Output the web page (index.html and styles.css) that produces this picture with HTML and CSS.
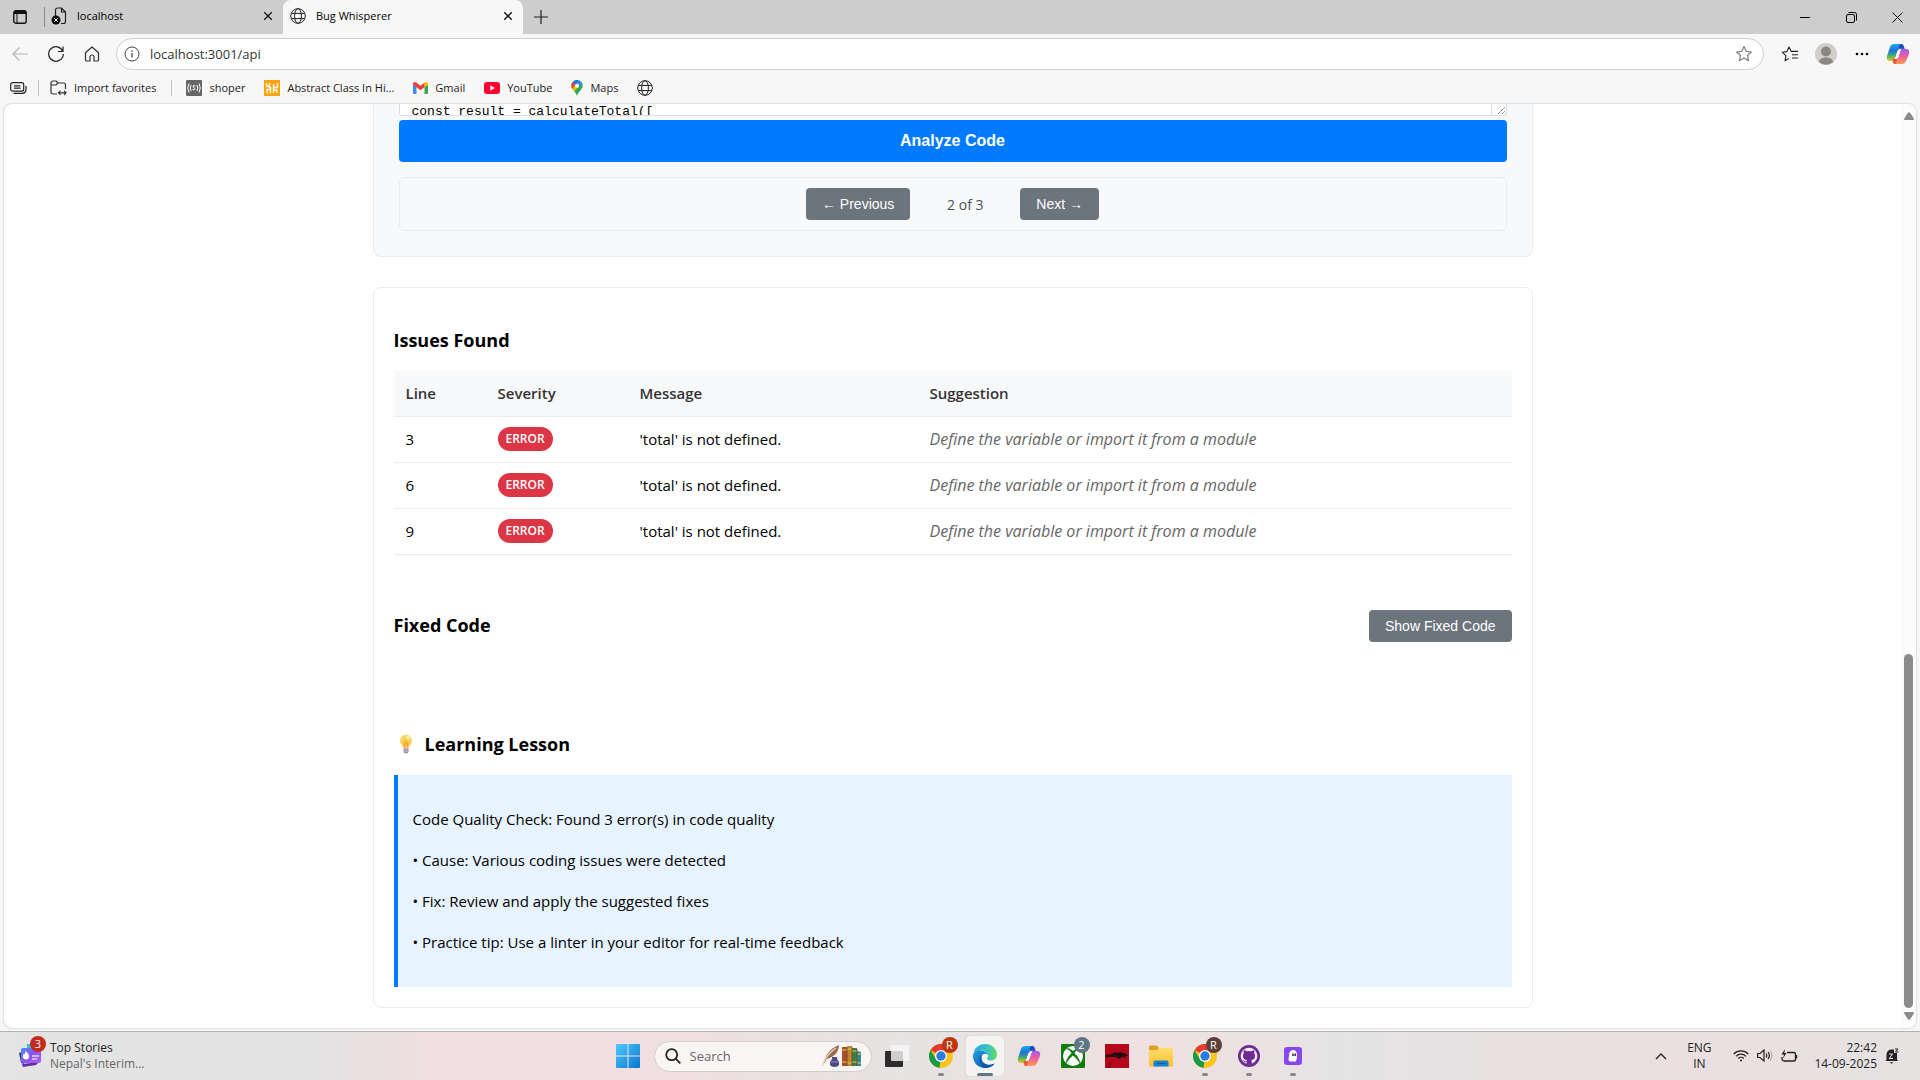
FILE: index.html
```html
<!DOCTYPE html>
<html lang="en">
  <head>
    <meta charset="utf-8" />
    <title>Bug Whisperer</title>
    <link rel="stylesheet" href="styles.css">
  </head>
  <body>

<svg class="defs" aria-hidden="true">
  <defs>
    <linearGradient id="cpA" x1="0" y1="0" x2="0" y2="1"><stop offset="0" stop-color="#19a9e8"/><stop offset=".4" stop-color="#2372d8"/><stop offset=".7" stop-color="#45b36b"/><stop offset="1" stop-color="#f3c613"/></linearGradient>
    <linearGradient id="cpB" x1="0" y1="0" x2="0" y2="1"><stop offset="0" stop-color="#9a5cf0"/><stop offset=".5" stop-color="#ec5f9c"/><stop offset="1" stop-color="#ff9a52"/></linearGradient>
    <linearGradient id="edA" x1="0" y1="0" x2="1" y2="0"><stop offset="0" stop-color="#2aa7e5"/><stop offset=".6" stop-color="#36c6c0"/><stop offset="1" stop-color="#66dc58"/></linearGradient>
    <linearGradient id="edB" x1="0" y1="0" x2="1" y2="1"><stop offset="0" stop-color="#1f9de0"/><stop offset="1" stop-color="#0c4fa0"/></linearGradient>
    <linearGradient id="win" x1="0" y1="0" x2="1" y2="1"><stop offset="0" stop-color="#4ecbfb"/><stop offset="1" stop-color="#0874d0"/></linearGradient>
    <linearGradient id="purple" x1="0" y1="0" x2="1" y2="1"><stop offset="0" stop-color="#4a8bf0"/><stop offset=".5" stop-color="#8a55f2"/><stop offset="1" stop-color="#b45cf6"/></linearGradient>
    <linearGradient id="fold" x1="0" y1="0" x2="0" y2="1"><stop offset="0" stop-color="#ffdc6b"/><stop offset="1" stop-color="#fcc02e"/></linearGradient>
    <radialGradient id="bulb" cx=".5" cy=".65" r=".6"><stop offset="0" stop-color="#f9b83e"/><stop offset="1" stop-color="#fddb6c"/></radialGradient>
  </defs>
  <symbol id="globe" viewBox="0 0 16 16"><g fill="none" stroke="#222" stroke-width="1"><circle cx="8" cy="8" r="7.3"/><ellipse cx="8" cy="8" rx="3.4" ry="7.3"/><path d="M1.4 5.4h13.2M1.4 10.6h13.2"/></g></symbol>
  <symbol id="close" viewBox="0 0 10 10"><path d="M1.2 1.2l7.6 7.6M8.8 1.2L1.2 8.8" stroke="#111" stroke-width="1.3"/></symbol>
  <symbol id="star" viewBox="0 0 18 18"><path d="M9 1.6l2.2 4.8 5.2.6-3.9 3.5 1.1 5.2L9 13.1l-4.6 2.6 1.1-5.2L1.6 7l5.2-.6z" fill="none" stroke="#777" stroke-width="1.1" stroke-linejoin="round"/></symbol>
  <symbol id="copilot" viewBox="0 0 24 24">
    <path d="M8.500 2h6c1.800 0 2.500 1 3 2.600L18 7h-3.500c-1.800 0-2.700 1-3.100 2.500L9 17.200c-.4 1.200-1.200 1.800-2.600 1.800H4c-2.800 0-3.800-2-3-5L4 5c.7-2 2-3 4.500-3z" fill="url(#cpA)"/>
    <path d="M14 2h1.500c1.200 0 1.800.8 2.200 2l1 3h-4c-1 0-1.800-1.200-2.200-2.400z" fill="#1b4cc0"/>
    <path d="M15.500 22h-6c-1.800 0-2.500-1-3-2.600L6 17h3.500c1.800 0 2.700-1 3.100-2.500L15 6.800C15.400 5.600 16.200 7 17.600 7H20c2.800 0 3.800 2 3 5l-3 7c-.7 2-2 3-4.500 3z" fill="url(#cpB)"/>
    <path d="M7 17h4c-1 2 0 5-1.500 5-1.500 0-2-1-2.500-2.600z" fill="#ea5a3a"/>
    <path d="M13.200 7.800c.4-.6 1-.8 1.800-.8l-2.600 7.500C12 16 11 17 9 17l2.400-7.500z" fill="#fff"/>
  </symbol>
  <symbol id="chrome" viewBox="0 0 24 24">
    <circle cx="12" cy="12" r="12" fill="#fcc51c"/>
    <path d="M12 12L1.600 6A12 12 0 0 1 22.400 6z" fill="#e33b2e"/>
    <path d="M1.600 6l5.200 9L12 18l-1 6A12 12 0 0 1 1.600 6z" fill="#189a4a"/>
    <path d="M12 12l5.200 3L12 24l-1.500 0z" fill="#fcc51c"/>
    <circle cx="12" cy="12" r="6" fill="#fff"/><circle cx="12" cy="12" r="4.700" fill="#2a7de1"/>
  </symbol>
</svg>

<!-- browser -->
<header class="browser">
  <div class="tabstrip">
    <button class="icon-btn" aria-label="Tab actions"><svg width="14" height="14" viewBox="0 0 14 14"><rect x=".8" y=".8" width="12.400" height="12.400" rx="2" fill="none" stroke="#111" stroke-width="1.400"/><path d="M1 2.500h12" stroke="#111" stroke-width="3"/><path d="M4 2v11" stroke="#111" stroke-width="1"/></svg></button>
    <span class="divider"></span>
    <div class="tab">
      <svg width="16" height="18" viewBox="0 0 16 18"><path d="M4.500 9V3a2 2 0 0 1 2-2h4l4 4v9.500a2 2 0 0 1-2 2H10M10.500 1v4h4" fill="none" stroke="#222" stroke-width="1.200"/><circle cx="5" cy="13" r="4.500" fill="#111"/><path d="M3.300 11.300l3.400 3.400M6.700 11.300l-3.400 3.400" stroke="#fff"/></svg>
      <span>localhost</span>
      <button class="x" aria-label="Close tab"><svg width="10" height="10"><use href="#close"/></svg></button>
    </div>
    <div class="tab active">
      <svg width="16" height="16"><use href="#globe"/></svg>
      <span>Bug Whisperer</span>
      <button class="x" aria-label="Close tab"><svg width="10" height="10"><use href="#close"/></svg></button>
    </div>
    <button class="icon-btn" aria-label="New tab"><svg width="14" height="14"><path d="M7 0v14M0 7h14" stroke="#222" stroke-width="1.200"/></svg></button>
    <div class="window-btns">
      <button aria-label="Minimize"><svg width="10" height="10"><path d="M0 5.500h10" stroke="#000"/></svg></button>
      <button aria-label="Restore"><svg width="11" height="11" fill="none" stroke="#000"><rect x=".5" y="2.500" width="8" height="8" rx="1.500"/><path d="M2.500 .5h6a2 2 0 0 1 2 2v6"/></svg></button>
      <button aria-label="Close"><svg width="11" height="11"><path d="M.5 .5l10 10M10.500 .5l-10 10" stroke="#000"/></svg></button>
    </div>
  </div>

  <div class="toolbar">
    <button class="icon-btn" aria-label="Back"><svg width="16" height="14" fill="none" stroke="#b5b5b5" stroke-width="1.200"><path d="M16 7H1M7.500 .5L1 7l6.500 6.500"/></svg></button>
    <button class="icon-btn" aria-label="Refresh"><svg width="18" height="18" fill="none" stroke="#222" stroke-width="1.200"><path d="M15.800 6.300A7.300 7.300 0 1 0 16.300 9M16 1.500v5h-5"/></svg></button>
    <button class="icon-btn" aria-label="Home"><svg width="16" height="16" fill="none" stroke="#333" stroke-width="1.200" stroke-linejoin="round"><path d="M1.500 6.800L8 1l6.500 5.800V14a1 1 0 0 1-1 1H10v-4a2 2 0 0 0-4 0v4H2.500a1 1 0 0 1-1-1z"/></svg></button>
    <div class="address">
      <svg width="16" height="16" fill="none" stroke="#444"><circle cx="8" cy="8" r="7"/><path d="M8 7v4.500M8 4.200v1.500" stroke-width="1.300"/></svg>
      <input type="text" aria-label="Address" value="localhost:3001/api">
      <svg width="18" height="18"><use href="#star"/></svg>
    </div>
    <button class="icon-btn" aria-label="Favorites"><svg width="18" height="18" fill="none" stroke="#222" stroke-width="1.100" stroke-linejoin="round"><path d="M8 13.400l-3.900 2.300.8-5L1.200 7.200l4.700-.6L8 2l2.200 4.400h6.800M11 9.700h6M11 13h6"/></svg></button>
    <button class="icon-btn" aria-label="Profile"><svg width="22" height="22" viewBox="0 0 22 22"><circle cx="11" cy="11" r="11" fill="#d1cdc8"/><circle cx="11" cy="8.500" r="5" fill="#8b8784"/><path d="M3.800 19c1-3.500 4-4.500 7.200-4.500s6.200 1 7.200 4.500A11 11 0 0 1 3.800 19z" fill="#8b8784"/></svg></button>
    <button class="icon-btn" aria-label="Settings"><svg width="14" height="4"><circle cx="2" cy="2" r="1.300"/><circle cx="7" cy="2" r="1.300"/><circle cx="12" cy="2" r="1.300"/></svg></button>
    <button class="icon-btn" aria-label="Copilot"><svg width="24" height="24"><use href="#copilot"/></svg></button>
  </div>

  <nav class="favorites">
    <button class="icon-btn" aria-label="Workspaces"><svg width="17" height="12" fill="none" stroke="#222" stroke-width="1.200"><rect x=".7" y=".7" width="13" height="8.500" rx="2"/><path d="M3.500 11.300h9a3.500 3.500 0 0 0 3.500-3.500V4M4 3.800h6.500M4 6.200h6.500"/></svg></button>
    <span class="divider"></span>
    <a href="#"><svg width="17" height="16" fill="none" stroke="#333" stroke-width="1.200"><path d="M7 14H3a2 2 0 0 1-2-2V3a2 2 0 0 1 2-2h3l2 2h5.500a2 2 0 0 1 2 2v4M1 5h5l2-2M8.500 12.800h7.500M10.500 10.800l-2 2 2 2M14 10.800l2 2-2 2"/></svg>Import favorites</a>
    <span class="divider"></span>
    <a href="#"><svg width="16" height="16"><rect width="16" height="16" rx="1" fill="#666"/><g fill="none" stroke="#fff"><path d="M3 3.500q-2.500 4.500 0 9M5 5q-1.500 3 0 6M13 3.500q2.500 4.500 0 9M11 5q1.500 3 0 6M9.500 6q-1.500-1-2.500 0c-.8 1.500 2.300 1.500 2 3q-1 1.500-2.500.5"/></g></svg>shoper</a>
    <a href="#"><svg width="16" height="16"><rect width="16" height="16" fill="#ffa407"/><path d="M2.500 3v3l4 1.500v6M3 13V9.500h3M5.500 3v4M9.500 13V7.500h4V3M9.500 7.500V4M13 10v3M9.500 10H13" stroke="#fff" stroke-width="1.400" fill="none"/></svg>Abstract Class In Hi...</a>
    <a href="#"><svg width="15" height="12" viewBox="0 0 15 12"><path d="M0 2v9a1 1 0 0 0 1 1h2.500V4z" fill="#4285f4"/><path d="M15 2v9a1 1 0 0 1-1 1h-2.500V4z" fill="#34a853"/><path d="M0 2c0-1.700 1.900-2.600 3.300-1.400L7.500 3.800l4.200-3.200V5L7.500 8.200 3.500 5.200 0 2.600z" fill="#ea4335"/><path d="M11.500 .8C13 -.6 15 .3 15 2v.8l-3.500 2.600z" fill="#fbbc04"/></svg>Gmail</a>
    <a href="#"><svg width="16" height="12"><rect width="16" height="12" rx="3" fill="#f03"/><path d="M6.300 3.300v5.400l4.500-2.700z" fill="#fff"/></svg>YouTube</a>
    <a href="#"><svg width="12" height="16" viewBox="0 0 12 16"><path d="M6 0a5.700 5.700 0 0 1 5.700 5.700C11.700 9.500 7.500 11 6 16 4.500 11 .3 9.500 .3 5.700A5.700 5.700 0 0 1 6 0z" fill="#34a853"/><path d="M.3 5.700A5.700 5.700 0 0 1 2 1.800l2.500 2L1.500 9Q.3 7.500 .3 5.700z" fill="#ea4335"/><path d="M2 1.800A5.700 5.700 0 0 1 8 .4L4.200 4.400z" fill="#1a73e8"/><path d="M8 .4a5.600 5.600 0 0 1 3.300 3L7.500 7 5 4z" fill="#4285f4"/><path d="M1.400 8.700L5 5l2.600 2L3.200 11z" fill="#fbbc04"/><circle cx="6" cy="5.700" r="2" fill="#fff"/></svg>Maps</a>
    <a href="#" aria-label="Site"><svg width="16" height="16"><use href="#globe"/></svg></a>
  </nav>
</header>

<!-- page -->
<div class="viewport">
  <main class="page">
    <div class="container">

      <section class="editor">
        <div class="code-box">
          <textarea aria-label="Code" rows="1" spellcheck="false">const result = calculateTotal([</textarea>
          <svg class="grip" width="15" height="11"><path d="M6 10l7-7M10 10l3-3" stroke="#555" stroke-dasharray="1.400 .6"/></svg>
        </div>
        <button class="analyze">Analyze Code</button>
        <div class="pager">
          <button class="btn">← Previous</button>
          <span class="page-info">2 of 3</span>
          <button class="btn">Next →</button>
        </div>
      </section>

      <section class="results">
        <h3>Issues Found</h3>
        <table>
          <colgroup><col class="c-line"><col class="c-sev"><col class="c-msg"><col></colgroup>
          <thead>
            <tr><th>Line</th><th>Severity</th><th>Message</th><th>Suggestion</th></tr>
          </thead>
          <tbody>
            <tr><td>3</td><td><span class="badge">ERROR</span></td><td>'total' is not defined.</td><td class="suggestion">Define the variable or import it from a module</td></tr>
            <tr><td>6</td><td><span class="badge">ERROR</span></td><td>'total' is not defined.</td><td class="suggestion">Define the variable or import it from a module</td></tr>
            <tr><td>9</td><td><span class="badge">ERROR</span></td><td>'total' is not defined.</td><td class="suggestion">Define the variable or import it from a module</td></tr>
          </tbody>
        </table>

        <div class="fixed-head">
          <h3>Fixed Code</h3>
          <button class="btn">Show Fixed Code</button>
        </div>

        <h3 class="lesson-title">
          <svg width="24" height="20" viewBox="0 0 24 20"><path d="M12 .5a6 6 0 0 1 6 6c0 3.500-3 4.500-3.300 8H9.300C9 11 6 10 6 6.500a6 6 0 0 1 6-6z" fill="url(#bulb)"/><path d="M10.500 14V9l1.500-1 1.500 1v5" fill="none" stroke="#f39a1c" stroke-width=".8"/><ellipse cx="14" cy="3.500" rx="1.500" ry="2" fill="#fff3b8"/><path d="M9.500 14.500h5v3q0 2-2.500 2t-2.500-2z" fill="#9b86a8"/><path d="M9.500 16h5M9.500 17.700h5" stroke="#d3c4dc" stroke-width=".7"/></svg>
          Learning Lesson
        </h3>
        <div class="lesson">
          <p>Code Quality Check: Found 3 error(s) in code quality</p>
          <p>• Cause: Various coding issues were detected</p>
          <p>• Fix: Review and apply the suggested fixes</p>
          <p>• Practice tip: Use a linter in your editor for real-time feedback</p>
        </div>
      </section>

    </div>
  </main>
  <div class="scrollbar">
    <svg width="10" height="8"><path d="M5 0Q6 0 10 7q0 1-1 1H1Q0 8 0 7 4 0 5 0z" fill="#8b8b8b"/></svg>
    <div class="track"><div class="thumb"></div></div>
    <svg width="10" height="8"><path d="M5 8Q6 8 10 1q0-1-1-1H1Q0 0 0 1 4 8 5 8z" fill="#8b8b8b"/></svg>
  </div>
</div>

<!-- taskbar -->
<footer class="taskbar">
  <div class="news">
    <div class="app-icon">
      <svg width="24" height="24" viewBox="0 0 24 24"><path d="M1 9l5-2v13l-3-1z" fill="#234a86"/><path d="M4 20l17-2-3 3-13 2z" fill="#5b2ea6"/><rect x="9" y="0" width="10" height="8" fill="#37bfd0"/><rect x="3" y="4" width="20" height="15" rx="2" fill="url(#purple)"/><path d="M7.500 6.500c1 2 4.500 3.500 3.500 7a3.300 3.300 0 0 1-6.200-.5c-.3-1.700.7-2.500 1.200-3.500l1 1z" fill="#fff"/><path d="M14 12h7M14 15h5" stroke="#e6d3ff" stroke-width="1.400"/></svg>
      <span class="count red">3</span>
    </div>
    <div><div>Top Stories</div><div class="muted">Nepal's Interim...</div></div>
  </div>

  <div class="apps">
    <button class="app" aria-label="Start"><svg width="24" height="24"><path d="M0 1q0-1 1-1h10.500v11.500H0zM12.500 0H23q1 0 1 1v10.500H12.500zM0 12.500h11.500V24H1q-1 0-1-1zM12.500 12.500H24V23q0 1-1 1H12.500z" fill="url(#win)"/></svg></button>
    <label class="search">
      <svg width="16" height="16" fill="none" stroke="#222" stroke-width="1.800"><circle cx="6.700" cy="6.700" r="5.500"/><path d="M10.800 10.800l4.500 4.500"/></svg>
      <input type="text" placeholder="Search" aria-label="Search">
      <svg width="42" height="24" viewBox="0 0 42 24">
        <path d="M1 22C4 14 7 5 18 1c0 7-5 12-12 14" fill="#9a6a4c"/><path d="M1 22C4 14 9 8 15 4" stroke="#f0d9bd" fill="none" stroke-width="1.300"/>
        <path d="M11 13h5v2l2 3v3q-1 2-4.500 2T9 21v-3l2-3z" fill="#4c4a86"/><path d="M10 18h7" stroke="#8f8cc8"/>
        <path d="M21 3h5v19h-5z" fill="#a8522c"/><path d="M26 2h5v20h-5z" fill="#c4862b"/><path d="M31 4h5v18h-5z" fill="#3c7f49"/><path d="M36 7l4 1v14h-4z" fill="#2f8a94"/>
        <path d="M21 6h5M21 18h5M26 5h5M26 19h5M31 7h5M31 18h5M36 10h4M36 19h4" stroke="#ecc862" stroke-width="1.200"/><path d="M26 3v19M31 3v19M36 5v17" stroke="#6d3a1c" stroke-width=".7"/>
      </svg>
    </label>
    <button class="app" aria-label="Task view"><svg width="24" height="24"><rect x="0" y="7" width="18" height="16" rx="1" fill="#2c2c2c"/><rect x="6" y="1" width="18" height="16" rx="1" fill="#f8f8f8" opacity=".8"/></svg></button>
    <button class="app running" aria-label="Chrome"><svg width="24" height="24"><use href="#chrome"/></svg><span class="count rust">R</span></button>
    <button class="app current" aria-label="Edge"><svg width="24" height="24" viewBox="0 0 24 24"><path d="M.5 9C2 3 7 0 12 0c7 0 12 5 12 10.500 0 3.500-2.500 6-6 6-2.500 0-4-1-4-2 0-.8 1.200-1 1.200-3C15.200 8.500 12 6.500 8.500 6.500S2 7.500 .5 9z" fill="url(#edA)"/><path d="M0 12c0-4 4-5.800 8-5.500 4 .2 6.800 2.500 7.200 4.500-1-1-2.200-1.300-3.200-1.300-3 0-4.500 3-3.500 6.300 1 3.200 4.500 5 8 5 2.500 0 4-.8 5.500-1.800C20 22 16.500 24 12 24 5.500 24 0 19 0 12z" fill="url(#edB)"/><path d="M9 10.500C6 13 5 18 10.500 23.800c3.500.7 8-.3 11-4.200-5 2.500-13 1-13-5.600 0-1.500 .2-2.500 .5-3.500z" fill="#0f57a8"/></svg></button>
    <button class="app" aria-label="Copilot"><svg width="24" height="24"><use href="#copilot"/></svg></button>
    <button class="app" aria-label="Xbox"><svg width="24" height="24" viewBox="0 0 24 24"><rect width="24" height="24" rx="1" fill="#107c10"/><circle cx="12" cy="12" r="10" fill="#fff"/><path d="M4 5C7 3 10 5 12 7c2-2 5-4 8-2-3-.5-5.500 2-6.500 4 3 3 6 7 5.500 11C17 16 14 13 12 11.500 10 13 7 16 5 20 4.500 16 7.500 12 10.500 9 9.500 7 7 4.500 4 5z" fill="#107c10"/></svg><span class="count slate">2</span></button>
    <button class="app" aria-label="Game"><svg width="24" height="24"><rect width="24" height="24" fill="#b5081b"/><path d="M0 11l7-1 3-2 2 1 4-1 2 1 3 1 2 2-3 0 1 2-4-1-3 2-3-2-7 0-3 1z" fill="#240d10"/><path d="M1 24c2-5 5-7 9-9-3 3-4 5-5 9" fill="#8d0617"/></svg></button>
    <button class="app" aria-label="Explorer"><svg width="24" height="24"><path d="M0 3q0-1.500 1.500-1.500h6L10 4v4H0z" fill="#e0a020"/><path d="M0 6h8l2-2h12.500Q24 4 24 5.500V21q0 1.500-1.500 1.500h-21Q0 22.500 0 21z" fill="url(#fold)"/><path d="M4.500 22.500V18q0-1.500 1.500-1.500h12q1.500 0 1.500 1.500v4.500z" fill="#1583d1"/><path d="M8 19.500h8" stroke="#0c5c9e" stroke-width="1.300"/></svg></button>
    <button class="app running" aria-label="Chrome, second profile"><svg width="24" height="24"><use href="#chrome"/></svg><span class="count brown">R</span></button>
    <button class="app running" aria-label="GitHub Desktop"><svg width="22" height="22" viewBox="0 0 22 22"><circle cx="11" cy="11" r="11" fill="#6e2b94"/><circle cx="11" cy="11" r="8.300" fill="#f4eef8"/><path d="M6 5l3 1.300q2-.5 4 0L16 5q.7 1.600.2 3Q17 9.300 17 11c0 3-1.800 3.900-3.800 4.200q.6.700.6 1.800v2.200H8.500V17q-2.500.5-3.300-1.800.8-.4 1.500.6.900 1 2 .4 0-.7.500-1C7 14.900 5 14 5 11q0-1.700.8-3Q5.300 6.500 6 5z" fill="#6e2b94"/></svg></button>
    <button class="app running" aria-label="Kiro"><svg width="18" height="18"><rect width="18" height="18" rx="3" fill="#8a45f2"/><path d="M5 14c-1-.5 0-3 0-6 0-3 1.800-5 4.200-5S13 5 13 8c0 4-.5 6.500-2.500 7-1 .2-1-.7-2-.7-1 .2-2.500 .5-3.500-.3z" fill="#fff"/><path d="M9 6.500v2.500M11.200 6.500v2.500" stroke="#111" stroke-width="1.300"/></svg></button>
  </div>

  <div class="tray">
    <svg width="12" height="7" fill="none" stroke="#222" stroke-width="1.400"><path d="M1 6l5-5 5 5"/></svg>
    <div class="lang"><div>ENG</div><div>IN</div></div>
    <div class="status">
      <svg width="16" height="13" fill="none" stroke="#222" stroke-width="1.200"><path d="M.7 5a10.300 10.300 0 0 1 14.600 0M3 7.300a7 7 0 0 1 10 0M5.200 9.500a4 4 0 0 1 5.600 0"/><circle cx="8" cy="11.500" r="1" fill="#222" stroke="none"/></svg>
      <svg width="16" height="13" fill="none" stroke="#222" stroke-width="1.200"><path d="M.7 4.500H3L7 1v11L3 8.500H.7zM9 4.500q1.500 2 0 4M11 3q2.700 3.500 0 7"/><path d="M13 1.500q3.800 5 0 10" stroke="#b5b0b0"/></svg>
      <svg width="17" height="14" fill="none" stroke="#222" stroke-width="1.300"><path d="M6 3.500h6.500a2 2 0 0 1 2 2V10a2 2 0 0 1-2 2H3a2 2 0 0 1-2-2V8M15.500 6v3.500"/><path d="M4 0L.5 5.500H3L2 9.500 5.500 4H3.300z" fill="#222" stroke="none"/></svg>
    </div>
    <div class="clock"><div>22:42</div><div>14-09-2025</div></div>
    <svg width="14" height="16" viewBox="0 0 14 16"><path d="M1.500 11.500V6.500A5 5 0 0 1 7 1.500h2v3.500h3v6.500l1 1.500H.5z" fill="#222"/><path d="M4.500 14.300h4l-2 1.500z" fill="#222"/><path d="M4 6h3.500L4.300 10.500H8" stroke="#eee" fill="none"/><path d="M10 1h3l-2.500 3h3" stroke="#222" fill="none"/></svg>
  </div>
</footer>

  </body>
</html>
```
FILE: styles.css
```css
*{
	box-sizing: border-box;
}

body{
	margin: 0;
	height: 100vh;
	display: flex;
	flex-direction: column;
	overflow: hidden;
	background-color: #f7f7f7;
	font-family: "Open Sans", "Noto Sans", sans-serif;
	font-size: 15px;
	line-height: 21px;
	color: #000;
}

button{
	border: none;
	background: none;
	padding: 0;
	font-family: "Liberation Sans", Arial, sans-serif;
}

svg{
	display: block;
	flex: none;
}

.defs{
	width: 0;
	height: 0;
}

/* browser */

.browser{
	font-size: 11px;
	line-height: 16px;
}

.icon-btn{
	display: flex;
	flex: none;
	width: 36px;
	align-items: center;
	justify-content: center;
}

.divider{
	width: 1px;
	height: 16px;
	background-color: #c4c4c4;
}

.tabstrip{
	display: flex;
	align-items: center;
	height: 34px;
	padding-left: 2px;
	background-color: #cdcdcd;
}

.tabstrip .divider{
	height: 20px;
	margin: 0 2px 0 6px;
	background-color: #8a8a8a;
}

.tab{
	display: flex;
	align-items: center;
	gap: 10px;
	width: 236px;
	height: 34px;
	padding: 0 10px 2px 4px;
}

.tab .x{
	margin-left: auto;
}

.tab.active{
	width: 240px;
	padding: 0 10px 2px 7px;
	background-color: #f7f7f7;
	border-radius: 8px 8px 0 0;
}

.window-btns{
	display: flex;
	margin-left: auto;
}

.window-btns button{
	display: flex;
	width: 46px;
	height: 34px;
	align-items: center;
	justify-content: center;
}

.toolbar{
	display: flex;
	align-items: center;
	height: 40px;
	padding: 0 4px 0 2px;
}

.address{
	display: flex;
	flex: 1;
	align-items: center;
	gap: 10px;
	height: 32px;
	margin: 0 8px 0 6px;
	padding: 0 10px 0 7px;
	background-color: #fff;
	border: 1px solid #cfcfcf;
	border-radius: 16px;
}

.address input{
	flex: 1;
	border: none;
	padding: 0;
	font-family: inherit;
	font-size: 13px;
	color: #333;
}

.favorites{
	display: flex;
	align-items: center;
	height: 30px;
	padding-bottom: 2px;
}

.favorites .divider{
	margin: 0 11px 0 2px;
}

.favorites a{
	display: flex;
	align-items: center;
	gap: 7px;
	margin-right: 19px;
	color: #1b1b1b;
	text-decoration: none;
}

.favorites a + .divider{
	margin: 0 14px 0 -4px;
}

/* page */

.viewport{
	display: flex;
	flex: 1;
	min-height: 0;
	margin: 0 4px 3px;
	overflow: hidden;
	background-color: #fff;
	border-radius: 8px;
	box-shadow: 0 0 2px #aaa;
}

.page{
	flex: 1;
}

.container{
	max-width: 1160px;
	margin: 0 auto;
}

.editor{
	padding: 0 25px 25px;
	margin-bottom: 30px;
	background-color: #f8f9fa;
	border: 1px solid #e9ecef;
	border-top: none;
	border-radius: 0 0 8px 8px;
}

.code-box{
	display: flex;
	height: 12px;
	margin-bottom: 4px;
	overflow: hidden;
	background-color: #fff;
	border: 1px solid #ddd;
	border-top: none;
	border-radius: 0 0 4px 4px;
}

.code-box textarea{
	flex: 1;
	height: 16px;
	padding: 0 12px;
	border: none;
	resize: none;
	overflow: hidden;
	font-family: "Liberation Mono", monospace;
	font-size: 13px;
	line-height: 16px;
}

.grip{
	border-left: 1px solid #ddd;
}

.analyze{
	display: block;
	width: 100%;
	height: 42px;
	background-color: #007bff;
	border-radius: 4px;
	color: #fff;
	font-size: 16px;
	font-weight: bold;
}

.pager{
	display: flex;
	align-items: center;
	justify-content: center;
	gap: 15px;
	margin-top: 15px;
	padding: 10px;
	border: 1px solid #e9ecef;
	border-radius: 6px;
}

.page-info{
	min-width: 80px;
	text-align: center;
	font-size: 14px;
	font-weight: 500;
	color: #495057;
}

.btn{
	height: 32px;
	padding: 0 16px;
	background-color: #6c757d;
	border-radius: 4px;
	color: #fff;
	font-size: 14px;
}

.results{
	padding: 20px;
	border: 1px solid #e9ecef;
	border-radius: 8px;
}

h3{
	margin: 20px 0 18px;
	font-size: 18px;
	line-height: 25px;
	font-weight: 700;
}

table{
	width: 100%;
	table-layout: fixed;
	border-collapse: collapse;
}

.c-line{
	width: 92px;
}

.c-sev{
	width: 142px;
}

.c-msg{
	width: 290px;
}

th,
td{
	height: 46px;
	padding: 0 12px;
	text-align: left;
	border-bottom: 1px solid #e9ecef;
}

th{
	height: 45px;
	background-color: #f8f9fa;
	font-weight: 600;
	color: #333;
}

.suggestion{
	color: #666;
	font-size: 16px;
	font-style: italic;
}

.badge{
	display: inline-block;
	vertical-align: middle;
	padding: 0 8px;
	background-color: #dc3545;
	border-radius: 12px;
	color: #fff;
	font-size: 12px;
	line-height: 24px;
	font-weight: 600;
}

.fixed-head{
	display: flex;
	align-items: center;
	justify-content: space-between;
	margin: 55px 0 90px;
}

.fixed-head h3{
	margin: 0;
}

.lesson-title{
	display: flex;
	align-items: center;
	gap: 7px;
	margin: 0 0 18px;
}

.lesson{
	padding: 16px 15px;
	background-color: #e7f3ff;
	border-left: 4px solid #007bff;
}

/* keep the outer paragraph margins inside the box */
.lesson{
	display: flow-root;
}

.lesson p{
	margin: 16px 0;
	line-height: 25px;
}

.scrollbar{
	display: flex;
	flex-direction: column;
	align-items: center;
	gap: 4px;
	width: 15px;
	padding: 8px 0;
	background-color: #fcfcfc;
}

.track{
	display: flex;
	flex: 1;
	flex-direction: column;
	justify-content: flex-end;
}

.thumb{
	width: 9px;
	height: 40%;
	background-color: #8b8b8b;
	border-radius: 5px;
}

/* taskbar */

.taskbar{
	display: grid;
	grid-template-columns: 1fr auto 1fr;
	height: 49px;
	background: linear-gradient(90deg, #e5e4e4 0, #e3e3e4 16%, #efdfe0 22%, #efdfe0 36%, #e6e3e3 47%, #f0e0e1 60%, #e4e4e4 70%, #ecdfe0 86%, #e5e2e2 100%);
	border-top: 1px solid #b3b3b3;
	font-size: 12px;
	line-height: 16px;
	color: #222;
}

.news{
	display: flex;
	align-items: center;
	gap: 8px;
	padding-left: 18px;
}

.muted{
	color: #666;
}

.app-icon,
.app{
	position: relative;
}

.count{
	position: absolute;
	top: -8px;
	right: -4px;
	width: 16px;
	height: 16px;
	border-radius: 50%;
	color: #fff;
	font-family: "Open Sans", sans-serif;
	font-size: 11px;
	line-height: 16px;
	text-align: center;
}

.app .count{
	top: 1px;
	right: 5px;
}

.red{
	background-color: #c42b1c;
}

.rust{
	background-color: #bf360c;
}

.slate{
	background-color: #5f7684;
}

.brown{
	background-color: #5d4037;
}

.apps{
	display: flex;
	align-items: center;
}

.app{
	display: flex;
	width: 44px;
	height: 40px;
	align-items: center;
	justify-content: center;
}

.current{
	width: 38px;
	margin: 0 3px;
	background-color: #f5f2f2;
	border-radius: 4px;
	box-shadow: 0 0 1px #aaa;
}

.running::after,
.current::after{
	content: "";
	position: absolute;
	bottom: 0;
	width: 6px;
	height: 3px;
	background-color: #888;
	border-radius: 2px;
}

.current::after{
	width: 16px;
	background-color: #5f7684;
}

.search{
	display: flex;
	align-items: center;
	gap: 9px;
	width: 218px;
	height: 31px;
	margin: 0 3px 0 4px;
	padding: 0 8px 0 10px;
	background-color: #f9f5f5;
	border: 1px solid #d5cccc;
	border-radius: 16px;
}

.search input{
	flex: 1;
	min-width: 0;
	padding: 0;
	border: none;
	background: none;
	font-family: inherit;
	font-size: 13px;
}

.search input::placeholder{
	color: #666;
}

.tray{
	display: flex;
	align-items: center;
	justify-content: flex-end;
	padding-right: 21px;
}

.lang{
	width: 32px;
	margin: 0 18px 0 16px;
	text-align: center;
}

.status{
	display: flex;
	gap: 8px;
}

.clock{
	margin: 0 8px 0 16px;
	text-align: right;
}
```
